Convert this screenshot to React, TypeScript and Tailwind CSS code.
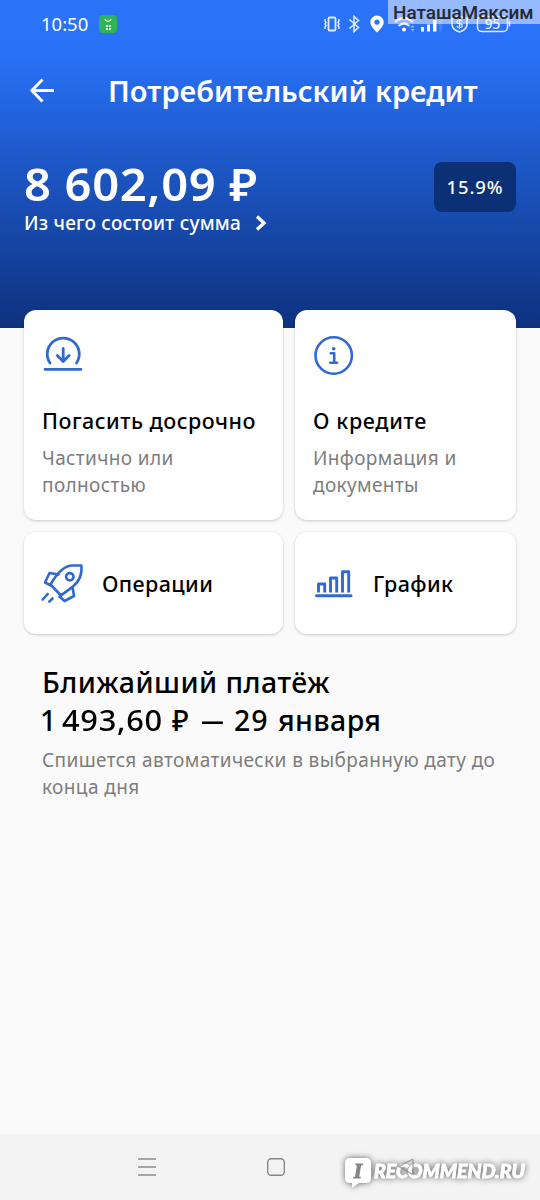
import type { ReactNode } from "react";

function StatusBar() {
  return (
    <div className="relative flex h-[48px] items-center pl-[41px] text-white">
      <span className="w-[58px] whitespace-nowrap text-[18.500px] leading-[24px]">10:50</span>
      <svg width="18" height="18" viewBox="0 0 18 18" fill="none">
        <rect width="18" height="18" rx="4" fill="#2fb457" />
        <path d="M6 4c.5 3 5.500 3 6 0" stroke="#fff" strokeWidth="1.100" />
        <path d="M7 10h2v2H7zM10 10h2v2h-2zM7 13h2v2H7zM10 13h2v2h-2z" fill="#e6ffe9" />
      </svg>
      <svg className="ml-[207px]" width="190" height="24" viewBox="324 12 190 24" fill="none" stroke="#e2ecff" strokeWidth="1.500">
        <rect x="328.500" y="17.500" width="7" height="13" rx="1" strokeWidth="1.800" />
        <path d="M325 19v2l1 1.500-1 1.500 1 1.500-1 1.500v2M339 19v2l-1 1.500 1 1.500-1 1.500 1 1.500v2" strokeWidth="1.500" />
        <path d="M349.500 19.500l9 8-4.500 4V16.500l4.500 4-9 8" strokeWidth="1.500" />
        <path d="M377 15.500a6.700 6.700 0 0 0-6.700 6.700c0 4.500 6.700 10.300 6.700 10.300s6.700-5.800 6.700-10.300a6.700 6.700 0 0 0-6.700-6.700zm0 4a2.600 2.600 0 1 1 0 5.200 2.600 2.600 0 0 1 0-5.200z" fill="#fff" stroke="none" />
        <path d="M395 22q9-8 18 0M398.500 26q5.500-5 11 0" strokeWidth="2.200" />
        <circle cx="404" cy="29.500" r="2" fill="#fff" stroke="none" />
        <path d="M410.500 27.500l2-2.500 2 2.500zM410.500 29l2 2.500 2-2.500z" fill="#91b4ff" stroke="none" />
        <path d="M421 27h3v4.500h-3zM427 24.500h3v7h-3zM433 20h3.500v11.500H433z" fill="#fff" stroke="none" />
        <path d="M439 17h3v14.500h-3z" fill="#4581fb" stroke="none" />
        <path d="M459.500 16l7.500 2.500v6.500q-1 5-7.500 7-6.500-2-7.500-7v-6.500z" />
        <path d="M462 21.500q-.5-1.500-2.500-1.500-2.500 0-2.500 1.800 0 1.700 2.500 1.900 2.700.3 2.700 2 0 1.800-2.700 1.800-2.300 0-2.700-1.700M459.500 18.500v10.500" strokeWidth="1.200" />
        <rect x="477.500" y="16.500" width="30" height="15" rx="4" />
        <path d="M509.500 21.500v5" />
        <text x="492.500" y="29" textAnchor="middle" fontSize="13.500" fontWeight="500" fill="#e8f0ff" stroke="none">95</text>
      </svg>
      <div className="absolute top-0 right-0 h-[24px] w-[152px] bg-white/50 pl-[5px] font-['Roboto',sans-serif] text-[19px] leading-[26px] font-medium tracking-[-0.050px] whitespace-nowrap text-[#26292f]">
        НаташаМаксим
      </div>
    </div>
  );
}

function Card({ children, className }: { children: ReactNode; className: string }) {
  return (
    <div className={"rounded-[12px] bg-white shadow-[0_1px_3px_rgba(0,0,0,0.200)] " + className}>{children}</div>
  );
}

function RepayIcon() {
  return (
    <svg width="42" height="42" viewBox="42 334 42 42" fill="none" stroke="#3169cf" strokeWidth="2.800" strokeLinecap="round" strokeLinejoin="round">
      <path d="M50 363a16 16 0 1 1 26.500 0" />
      <path d="M45 369.300h36M63.200 348.500v13M57.300 355.500l5.900 6 5.900-6" />
    </svg>
  );
}

function InfoIcon() {
  return (
    <svg width="42" height="42" viewBox="313 334 42 42" fill="none" stroke="#3169cf" strokeWidth="2.600" strokeLinecap="round" strokeLinejoin="round">
      <circle cx="333.700" cy="355.500" r="18.200" />
      <path d="M330.800 353.300h3.400v9.400M330.300 362.700h6.800" />
      <circle cx="333.700" cy="348.700" r="1.800" fill="#3169cf" stroke="none" />
    </svg>
  );
}

function RocketIcon() {
  return (
    <svg width="44" height="44" viewBox="40 561 44 44" fill="none" stroke="#3169cf" strokeWidth="2.600" strokeLinecap="round" strokeLinejoin="round">
      <path d="M50.500 584.500C56 575 64 565 73 565.500h8.500c.8 9-2 15.500-8 20.500-4.500 4-9 6.500-12.500 9.500z" />
      <path d="M58.500 574.500l-9-1.500-4.500 9.500 6 3M72.500 587l1.500 9-9.500 5-5-4.500 2-2" />
      <circle cx="69.800" cy="576.800" r="3.700" />
      <path d="M47.700 594l-5 5.500M52.500 598.500l-3.200 3.200" />
    </svg>
  );
}

function ChartIcon() {
  return (
    <svg width="40" height="40" viewBox="314 563 40 40" fill="none" stroke="#3169cf" strokeWidth="2.900" strokeLinecap="round" strokeLinejoin="round">
      <path d="M316.500 595.700h34.500" strokeWidth="3" />
      <path d="M318.500 592.500v-8.500h6.200v8.500M330.500 592.500v-14.500h6.200v14.500M342.500 592.500v-20.700h6.200v20.700" strokeLinecap="butt" />
    </svg>
  );
}

function NavBar() {
  return (
    <div className="relative h-[66px] bg-[#f3f3f3]">
      <svg className="block" width="540" height="66" viewBox="0 1134 540 66" fill="none">
        <path d="M138 1159h18M138 1167h18M138 1175h18" stroke="#8c8c8c" strokeWidth="1.600" />
        <rect x="267.700" y="1158.700" width="16.600" height="16.600" rx="3.500" stroke="#868686" strokeWidth="1.400" />
        <g className="[filter:drop-shadow(0_0_3px_rgba(0,0,0,0.600))]">
          <path d="M350 1158h16q5 0 5 5v15q0 5-5 5h-7l-7 5v-5h-2q-5 0-5-5v-15q0-5 5-5z" fill="#fff" />
          <text x="358" y="1177.500" textAnchor="middle" className="font-['Liberation_Serif',serif] text-[20px] font-bold italic" fill="#858585" stroke="#858585" strokeWidth="1.200">I</text>
          <text x="374" y="1178" textLength="151" lengthAdjust="spacingAndGlyphs" className="font-['Lato',sans-serif] text-[18px] font-black italic" fill="#fff" stroke="#fff" strokeWidth=".8">RECOMMEND.RU</text>
        </g>
        <path d="M412 1159.500l-13 7 13 7.500q1 0 1-1.500v-12q0-1.300-1-1z" stroke="#777" strokeOpacity=".65" strokeWidth="1.400" />
      </svg>
    </div>
  );
}

export default function App() {
  return (
    <div className="flex h-[1200px] w-[540px] flex-col overflow-hidden bg-[#fafafa] font-['Noto_Sans',sans-serif] text-black">
      <header className="h-[328px] shrink-0 bg-[linear-gradient(to_bottom,#2b74fa_0px,#2972f8_50px,#0d3280_325px)] text-white">
        <StatusBar />
        <div className="flex items-center pt-[23px] pl-[30px]">
          <svg width="25" height="26" viewBox="0 0 25 26" fill="none" stroke="#fff" strokeWidth="2.900" strokeLinejoin="round">
            <path d="M24 12.500H2M12.500 1.500L1.800 12.500l10.700 11" />
          </svg>
          <h1 className="ml-[53px] text-[29px] leading-[40px] font-semibold whitespace-nowrap">Потребительский кредит</h1>
        </div>
        <div className="flex items-start justify-between pt-[43px] pr-[24px] pl-[24px]">
          <div>
            <div className="w-max origin-left scale-x-[1.060] text-[44.500px] leading-[60px] font-semibold tracking-[0.600px] whitespace-nowrap">8 602,09 ₽</div>
            <div className="-mt-[2px] flex items-center gap-[14px] text-[19px] leading-[22px] font-medium tracking-[0.200px] whitespace-nowrap">
              <span>Из чего состоит сумма</span>
              <svg width="12" height="18" viewBox="0 0 12 18" fill="none" stroke="#fff" strokeWidth="3.300"><path d="M2 2.500L9 9l-7 6.500" /></svg>
            </div>
          </div>
          <div className="mt-[8px] flex h-[50px] w-[82px] items-center justify-center rounded-[8px] bg-[#0c3075] text-[18.500px] font-medium tracking-[0.900px]">15.9%</div>
        </div>
      </header>
      <main className="-mt-[18px] flex-1">
        <div className="grid grid-cols-[259px_221px] grid-rows-[210px_102px] gap-[12px] pl-[24px]">
          <Card className="pt-[24px] pl-[18px]">
            <RepayIcon />
            <div className="mt-[30px] text-[21.500px] leading-[30px] font-medium tracking-[0.500px] whitespace-nowrap">Погасить досрочно</div>
            <div className="mt-[9px] text-[19px] leading-[27px] tracking-[0.370px] whitespace-nowrap text-[#7d7d7d]">Частично или<br />полностью</div>
          </Card>
          <Card className="pt-[24px] pl-[18px]">
            <InfoIcon />
            <div className="mt-[30px] text-[21.500px] leading-[30px] font-medium tracking-[0.650px] whitespace-nowrap">О кредите</div>
            <div className="mt-[9px] text-[19px] leading-[27px] tracking-[0.370px] whitespace-nowrap text-[#7d7d7d]">Информация и<br />документы</div>
          </Card>
          <Card className="flex items-center pl-[16px]">
            <RocketIcon />
            <span className="ml-[18px] pt-[2px] text-[21.500px] font-medium tracking-[0.400px]">Операции</span>
          </Card>
          <Card className="flex items-center pl-[19px]">
            <ChartIcon />
            <span className="ml-[19px] pt-[2px] text-[21.500px] font-medium tracking-[0.400px]">График</span>
          </Card>
        </div>
        <section className="pt-[29px] pl-[42px] whitespace-nowrap">
          <h2 className="text-[28.500px] leading-[38px] font-medium tracking-[0.450px]">Ближайший платёж</h2>
          <div className="-ml-[2px] flex text-[28.500px] leading-[38px] font-medium">
            <span className="w-[22px]">1</span>
            <span className="w-[110px]"><span className="inline-block origin-left scale-x-[1.080] tracking-[0.700px]">493,60</span></span>
            <span className="w-[29px]">₽</span>
            <span className="w-[33px]"><span className="inline-block origin-left scale-x-[0.800]">—</span></span>
            <span className="w-[44px] tracking-[1px]">29</span>
            <span className="tracking-[0.400px]">января</span>
          </div>
          <p className="mt-[8px] text-[19px] leading-[27px] tracking-[0.400px] text-[#7d7d7d]">Спишется автоматически в выбранную дату до<br />конца дня</p>
        </section>
      </main>
      <NavBar />
    </div>
  );
}
